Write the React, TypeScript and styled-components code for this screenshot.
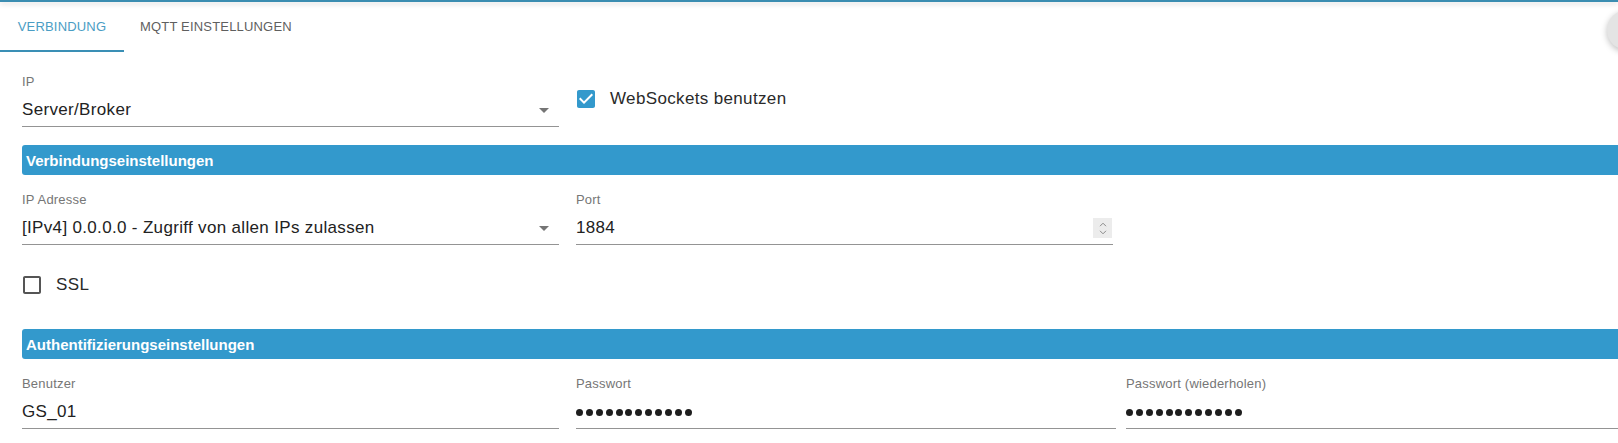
import React from 'react';
import styled, { createGlobalStyle } from 'styled-components';

const GlobalStyle = createGlobalStyle`
    html, body {
        margin: 0;
        padding: 0;
        background: #ffffff;
        overflow: hidden;
    }
    body {
        font-family: "Liberation Sans", Arial, sans-serif;
    }
`;

const Page = styled.div`
    position: relative;
    width: 100%;
    height: 443px;
    overflow: hidden;
    background: #fff;
`;

const AppBarEdge = styled.div`
    height: 2px;
    background: #3b8db1;
    box-shadow: 0 2px 5px rgba(0, 0, 0, 0.18);
`;

const Fab = styled.div`
    position: absolute;
    top: 10px;
    left: 1607px;
    width: 40px;
    height: 40px;
    border-radius: 50%;
    background: #e4e4e4;
    box-shadow: 0 2px 6px rgba(0, 0, 0, 0.25);
`;

const TabBar = styled.div`
    display: flex;
    height: 50px;
`;

const Tab = styled.div<{ $active?: boolean }>`
    display: flex;
    align-items: center;
    justify-content: center;
    min-width: 124px;
    padding: 0 16px;
    box-sizing: border-box;
    font-size: 13px;
    letter-spacing: 0.18px;
    text-transform: uppercase;
    color: ${(p) => (p.$active ? '#4a9dc4' : '#5f5f5f')};
    border-bottom: 2px solid ${(p) => (p.$active ? '#3a8fb5' : 'transparent')};
`;

const Content = styled.div`
    padding-left: 22px;
`;

const Row = styled.div<{ $top: number }>`
    display: flex;
    align-items: flex-start;
    margin-top: ${(p) => p.$top + 'px'};
`;

const Field = styled.div<{ $w?: number; $ml?: number }>`
    display: flex;
    flex-direction: column;
    ${(p) => (p.$w ? `width: ${p.$w}px; flex: none;` : 'flex: 1;')}
    margin-left: ${(p) => (p.$ml || 0) + 'px'};
`;

const Label = styled.div`
    font-size: 13px;
    line-height: 16px;
    letter-spacing: 0.2px;
    color: #767676;
    margin-bottom: 10px;
`;

const Value = styled.div`
    display: flex;
    align-items: center;
    height: 20px;
    padding-bottom: 6px;
    border-bottom: 1px solid #949494;
    font-size: 17px;
    letter-spacing: 0.33px;
    color: #222;
`;

const ValueText = styled.div`
    flex: 1;
    white-space: nowrap;
`;

const DropArrow = styled.svg`
    width: 24px;
    height: 24px;
    margin-right: 3px;
    fill: #757575;
`;

const Spinner = styled.div`
    display: flex;
    flex-direction: column;
    align-items: center;
    justify-content: center;
    gap: 3px;
    width: 19px;
    height: 20px;
    margin-right: 1px;
    background: #ececec;
    svg {
        width: 8px;
        height: 5px;
        stroke: #8a8a8a;
        fill: none;
    }
`;

const Dots = styled.div`
    display: flex;
    gap: 2.9px;
`;

const Dot = styled.span`
    width: 7px;
    height: 7px;
    border-radius: 50%;
    background: #1e1e1e;
`;

const CheckLabel = styled.label<{ $top?: number; $left?: number }>`
    display: flex;
    align-items: center;
    gap: 12px;
    margin-top: ${(p) => (p.$top || 0) + 'px'};
    margin-left: ${(p) => (p.$left || 0) + 'px'};
    font-size: 17px;
    letter-spacing: 0.35px;
    color: #2a2a2a;
`;

const Box = styled.svg<{ $checked?: boolean }>`
    width: 24px;
    height: 24px;
    fill: ${(p) => (p.$checked ? '#3399cc' : '#555')};
`;

const SectionBar = styled.div<{ $top: number }>`
    display: flex;
    align-items: center;
    height: 30px;
    margin-top: ${(p) => p.$top + 'px'};
    margin-right: -10px;
    padding-left: 4px;
    border-radius: 3px;
    background: #3399cc;
    color: #fff;
    font-size: 15px;
    font-weight: bold;
`;

function Checkbox({ checked, label, top, left }: { checked?: boolean; label: string; top?: number; left?: number }) {
    return (
        <CheckLabel $top={top} $left={left}>
            <Box $checked={checked} viewBox="0 0 24 24">
                {checked ? (
                    <path d="M19 3H5c-1.11 0-2 .9-2 2v14c0 1.1.89 2 2 2h14c1.11 0 2-.9 2-2V5c0-1.1-.89-2-2-2zm-9 14l-5-5 1.41-1.41L10 14.17l7.59-7.59L19 8l-9 9z" />
                ) : (
                    <path d="M19 5v14H5V5h14m0-2H5c-1.1 0-2 .9-2 2v14c0 1.1.9 2 2 2h14c1.1 0 2-.9 2-2V5c0-1.1-.9-2-2-2z" />
                )}
            </Box>
            {label}
        </CheckLabel>
    );
}

function SelectField({ label, value, w }: { label: string; value: string; w: number }) {
    return (
        <Field $w={w}>
            <Label>{label}</Label>
            <Value>
                <ValueText>{value}</ValueText>
                <DropArrow viewBox="0 0 24 24">
                    <path d="M7 10l5 5 5-5z" />
                </DropArrow>
            </Value>
        </Field>
    );
}

function PasswordDots({ count }: { count: number }) {
    return (
        <Dots>
            {Array.from({ length: count }).map((_, i) => (
                <Dot key={i} />
            ))}
        </Dots>
    );
}

export default function App() {
    return (
        <>
            <GlobalStyle />
            <Page>
                <AppBarEdge />
                <Fab />
                <TabBar>
                    <Tab $active>Verbindung</Tab>
                    <Tab>MQTT Einstellungen</Tab>
                </TabBar>

                <Content>
                    <Row $top={22}>
                        <SelectField label="IP" value="Server/Broker" w={537} />
                        <Checkbox checked label="WebSockets benutzen" top={13} left={15} />
                    </Row>

                    <SectionBar $top={18}>Verbindungseinstellungen</SectionBar>

                    <Row $top={17}>
                        <SelectField label="IP Adresse" value="[IPv4] 0.0.0.0 - Zugriff von allen IPs zulassen" w={537} />
                        <Field $w={537} $ml={17}>
                            <Label>Port</Label>
                            <Value>
                                <ValueText>1884</ValueText>
                                <Spinner>
                                    <svg viewBox="0 0 8 5">
                                        <path d="M1 4.2L4 1.2L7 4.2" />
                                    </svg>
                                    <svg viewBox="0 0 8 5">
                                        <path d="M1 0.8L4 3.8L7 0.8" />
                                    </svg>
                                </Spinner>
                            </Value>
                        </Field>
                    </Row>

                    <Checkbox label="SSL" top={28} left={-2} />

                    <SectionBar $top={32}>Authentifizierungseinstellungen</SectionBar>

                    <Row $top={17}>
                        <Field $w={537}>
                            <Label>Benutzer</Label>
                            <Value>
                                <ValueText>GS_01</ValueText>
                            </Value>
                        </Field>
                        <Field $w={540} $ml={17}>
                            <Label>Passwort</Label>
                            <Value>
                                <PasswordDots count={12} />
                            </Value>
                        </Field>
                        <Field $ml={10}>
                            <Label>Passwort (wiederholen)</Label>
                            <Value>
                                <PasswordDots count={12} />
                            </Value>
                        </Field>
                    </Row>
                </Content>
            </Page>
        </>
    );
}
